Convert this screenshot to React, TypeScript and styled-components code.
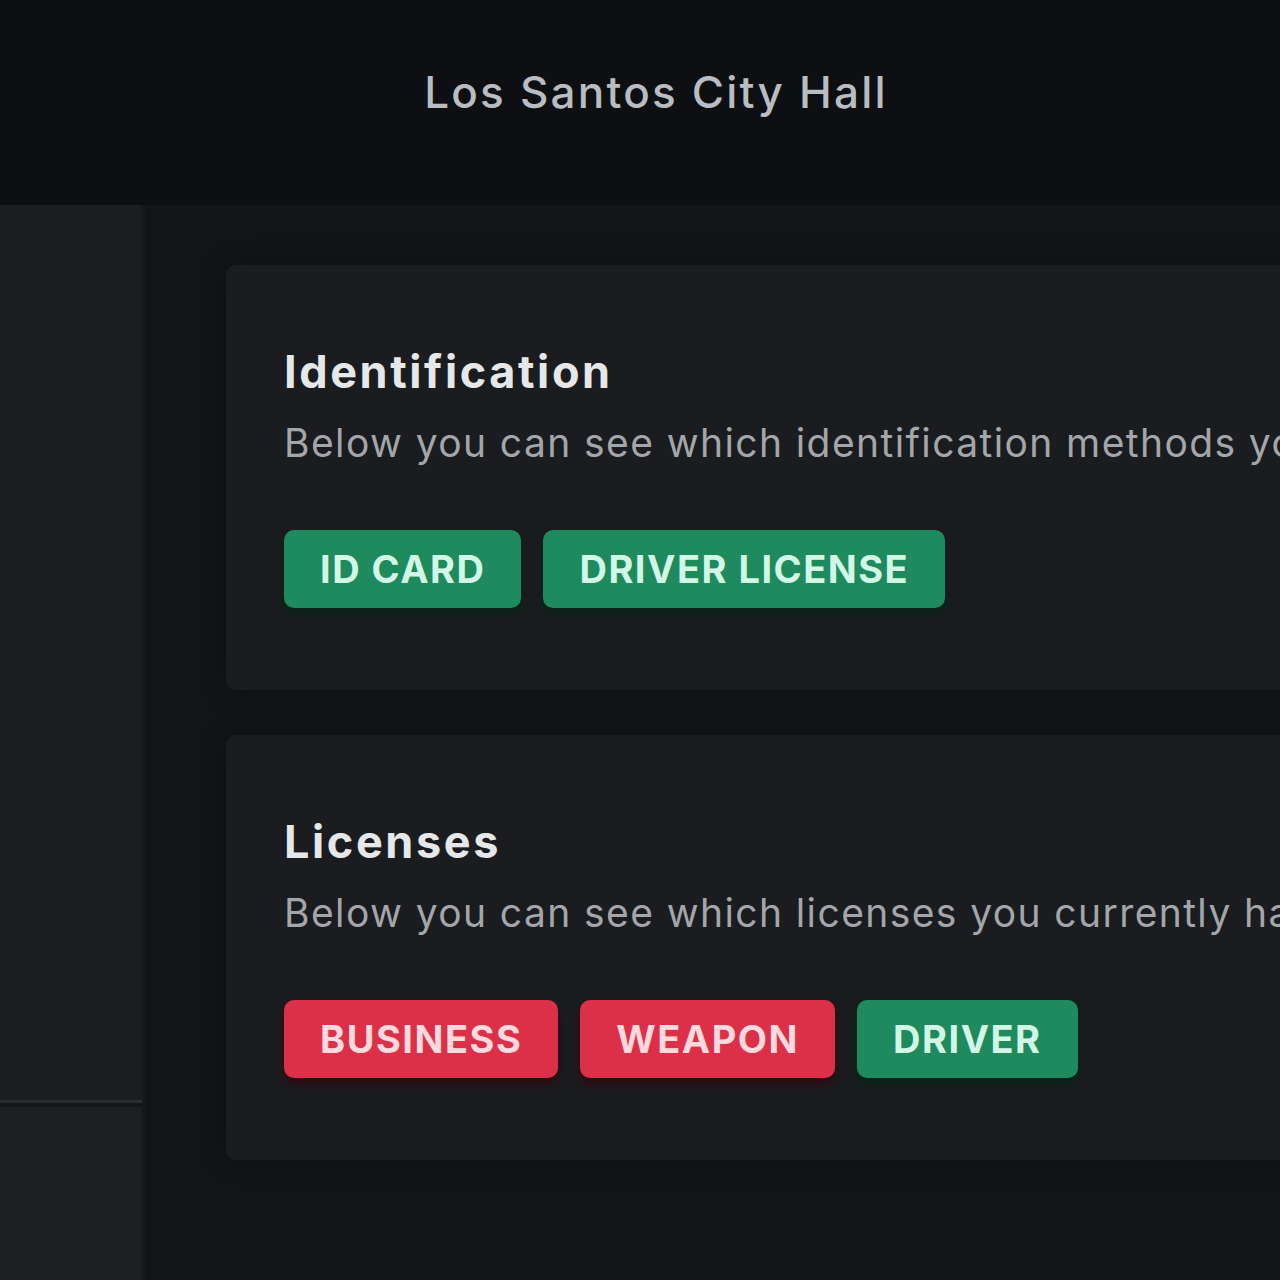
import React from 'react';
import styled, { createGlobalStyle } from 'styled-components';

const GlobalStyle = createGlobalStyle`
  html, body {
    margin: 0;
    padding: 0;
    background: #121518;
    overflow: hidden;
  }

  body {
    font-family: Inter, 'Noto Sans', 'Liberation Sans', sans-serif;
  }

  * {
    box-sizing: border-box;
  }
`;

const Page = styled.div`
  width: 1280px;
  height: 1280px;
  display: flex;
  flex-direction: column;
  overflow: hidden;
`;

const Header = styled.header`
  height: 205px;
  flex-shrink: 0;
  background: #0d0f13;
  display: flex;
  justify-content: center;
  padding: 64px 0 0 32px;
`;

const Title = styled.h1`
  margin: 0;
  font-size: 44px;
  line-height: 56px;
  font-weight: 500;
  color: #b9bcc0;
  letter-spacing: 2.2px;
`;

const Body = styled.div`
  flex: 1;
  display: flex;
  min-height: 0;
`;

const Sidebar = styled.aside`
  width: 146px;
  flex-shrink: 0;
  background: #1b1d21;
  border-right: 4px solid #16181b;
  display: flex;
  flex-direction: column;
  justify-content: flex-end;
`;

const SidebarFooter = styled.div`
  height: 180px;
  border-top: 3px solid #2a2c30;
  box-shadow: inset 0 4px 0 #141619;
  background: #1c1e22;
`;

const Main = styled.main`
  flex: 1;
  display: flex;
  flex-direction: column;
  gap: 45px;
  padding: 60px 0 0 80px;
  overflow: hidden;
`;

const Card = styled.section`
  width: 1200px;
  flex-shrink: 0;
  background: #1a1c1f;
  border-radius: 10px;
  padding: 80px 0 82px 58px;
  box-shadow: 0 0 24px rgba(0, 0, 0, 0.25);
`;

const CardTitle = styled.h2`
  margin: 0 0 16px;
  font-size: 45px;
  line-height: 54px;
  font-weight: 700;
  color: #e6e7e8;
  letter-spacing: 2.6px;
`;

const CardText = styled.p`
  margin: 0;
  font-size: 39px;
  line-height: 56px;
  color: #a3a6aa;
  white-space: nowrap;
  letter-spacing: 1.4px;
`;

const BadgeRow = styled.div`
  display: flex;
  gap: 22px;
  margin-top: 59px;
`;

const Badge = styled.span<{ $active: boolean }>`
  height: 78px;
  padding: 0 36px;
  display: inline-flex;
  align-items: center;
  border-radius: 10px;
  font-size: 38px;
  font-weight: 700;
  letter-spacing: 1.5px;
  text-transform: uppercase;
  background: ${({ $active }) => ($active ? '#1e8a5e' : '#dc3048')};
  color: ${({ $active }) => ($active ? '#d2f7e6' : '#ffd9de')};
  box-shadow: 0 6px 10px
    ${({ $active }) => ($active ? 'rgba(0, 40, 20, 0.7)' : 'rgba(60, 0, 10, 0.7)')};
`;

const sections = [
  {
    title: 'Identification',
    text: 'Below you can see which identification methods you currently have',
    items: [
      { label: 'ID Card', active: true },
      { label: 'Driver License', active: true },
    ],
  },
  {
    title: 'Licenses',
    text: 'Below you can see which licenses you currently have',
    items: [
      { label: 'Business', active: false },
      { label: 'Weapon', active: false },
      { label: 'Driver', active: true },
    ],
  },
];

function App() {
  return (
    <Page>
      <GlobalStyle />
      <Header>
        <Title>Los Santos City Hall</Title>
      </Header>
      <Body>
        <Sidebar>
          <SidebarFooter />
        </Sidebar>
        <Main>
          {sections.map((section) => (
            <Card key={section.title}>
              <CardTitle>{section.title}</CardTitle>
              <CardText>{section.text}</CardText>
              <BadgeRow>
                {section.items.map((item) => (
                  <Badge key={item.label} $active={item.active}>
                    {item.label}
                  </Badge>
                ))}
              </BadgeRow>
            </Card>
          ))}
        </Main>
      </Body>
    </Page>
  );
}

export default App;
